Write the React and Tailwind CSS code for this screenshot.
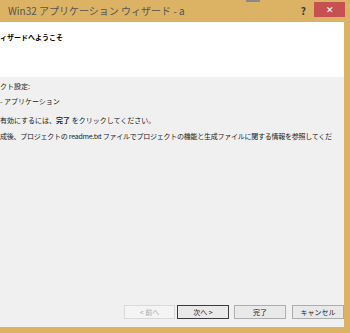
import React from 'react';

const font = { fontFamily: '"Noto Sans CJK JP", "Liberation Sans", sans-serif' };

const Btn = ({ children, disabled, primary }) => (
  <button
    className={
      disabled
        ? 'h-[14px] w-[51px] border border-[#d9d9d9] bg-[#f4f4f4] text-[7px] leading-none text-[#a8a8a8]'
        : primary
        ? 'h-[14px] w-[52px] border border-[#3c3c3c] bg-[#e9e9e9] text-[7px] leading-none text-[#222]'
        : 'h-[14px] w-[52px] border border-[#adadad] bg-[#e9e9e9] text-[7px] leading-none text-[#222]'
    }
  >
    {children}
  </button>
);

export default function App() {
  return (
    <div className="w-[350px] h-[333px] overflow-hidden bg-[#dcb264] flex flex-col" style={font}>
      {/* title bar */}
      <div className="h-[22px] flex items-center relative shrink-0">
        <div className="absolute left-[246px] top-0 h-[2px] w-[14px] bg-[#8a8a8a]" />
        <span className="ml-[8px] text-[10px] leading-none text-[#555] whitespace-nowrap">Win32 アプリケーション ウィザード - a</span>
        <span className="ml-auto mr-[8px] text-[10px] font-bold text-[#3a3a3a] leading-none">?</span>
        <div className="mr-[5px] mb-[4px] w-[31px] h-[15px] bg-[#c75050] flex items-center justify-center text-white text-[9px] leading-none">✕</div>
      </div>
      <div className="flex flex-1 min-h-0 pr-[6px]">
        <div className="flex-1 flex flex-col bg-[#f0f0f0] mb-[6px]">
          {/* header */}
          <div className="h-[55px] bg-white shrink-0 pt-[12px]">
            <div className="text-[7px] font-bold text-black leading-none whitespace-nowrap">ィザードへようこそ</div>
          </div>
          {/* body */}
          <div className="flex-1 text-[7px] leading-none text-[#222] whitespace-nowrap overflow-hidden">
            <div className="mt-[6px]">クト設定:</div>
            <div className="mt-[8px]">- アプリケーション</div>
            <div className="mt-[12px]">有効にするには、<b>完了</b> をクリックしてください。</div>
            <div className="mt-[9px] tracking-[-0.25px]">成後、プロジェクトの readme.txt ファイルでプロジェクトの機能と生成ファイルに関する情報を参照してくだ</div>
          </div>
          {/* buttons */}
          <div className="h-[24px] flex items-start pt-[2px] gap-[2px] pl-[124px] shrink-0">
            <Btn disabled>&lt; 前へ</Btn>
            <Btn primary>次へ &gt;</Btn>
            <div className="w-[1px]" />
            <Btn>完了</Btn>
            <div className="w-[2px]" />
            <Btn>キャンセル</Btn>
          </div>
        </div>
      </div>
    </div>
  );
}
